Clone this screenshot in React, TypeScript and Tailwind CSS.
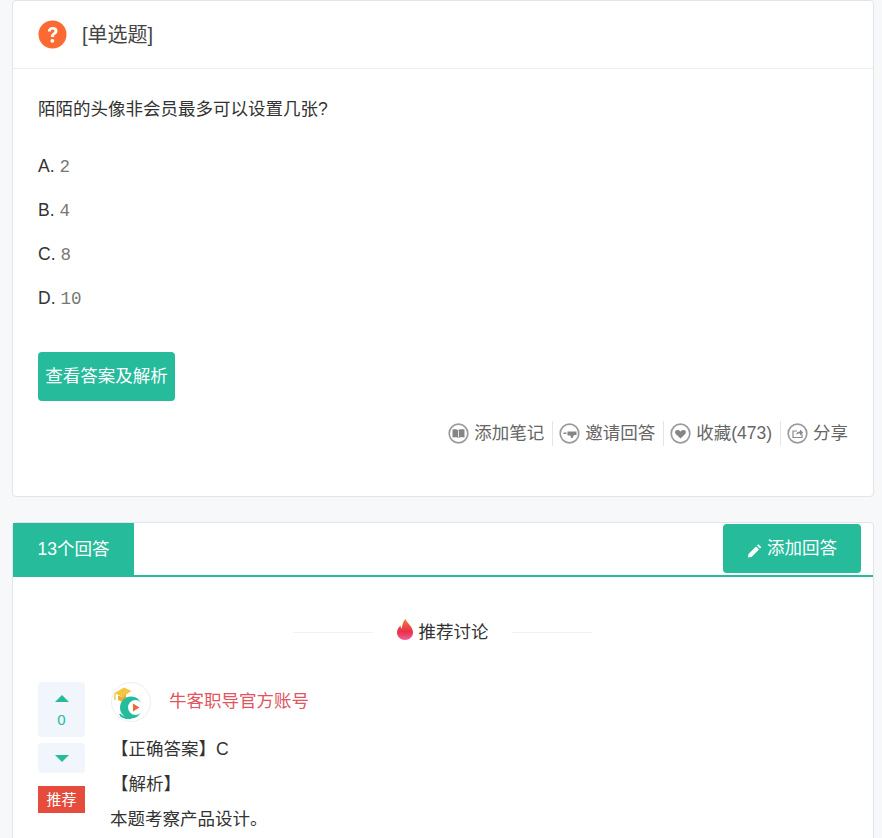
const font = { fontFamily: '"Liberation Sans", "Noto Sans CJK SC", sans-serif' };

const Round = ({ children }: { children: React.ReactNode }) => (
  <svg width="21" height="21" viewBox="0 0 21 21" className="shrink-0">
    <circle cx="10.5" cy="10.5" r="9.3" fill="#fff" stroke="#9b9b9b" strokeWidth="1.7" />
    {children}
  </svg>
);

const actions = [
  {
    label: "添加笔记",
    icon: (
      <>
        <path d="M4.500 6.500c2.300-.5 4.700-.3 5.600.7.900-1 3.500-1.200 6.400-.7v8c-2.500-.5-5-.4-6 .6-1-1-3.500-1.100-6-.6z" fill="#858585" />
        <path d="M10.500 7.500v7" stroke="#fff" strokeWidth="0.8" />
      </>
    ),
  },
  {
    label: "邀请回答",
    icon: <path d="M8.500 8.500h9v3.500h-2.500l-1.500 3h-1.500l-.5-2.500H8.500zM4.500 9.500h3v1.500h-3z" fill="#858585" />,
  },
  {
    label: "收藏(473)",
    icon: <path d="M10.500 15.500 5.800 11c-1.500-1.700-.5-4 1.700-4 1.300 0 2.300.6 3 1.500.7-.9 1.700-1.500 3-1.500 2.200 0 3.200 2.300 1.700 4z" fill="#858585" />,
  },
  {
    label: "分享",
    icon: (
      <>
        <path d="M15 11v3.500H6V8h4" fill="none" stroke="#8a8a8a" strokeWidth="1.200" />
        <path d="M9 12c.3-2.500 2-3.500 4-3.500V6.500l3.200 3-3.200 3v-2c-1.600 0-3 .4-4 1.500z" fill="#8a8a8a" />
      </>
    ),
  },
];

const options = [
  ["A.", "2"],
  ["B.", "4"],
  ["C.", "8"],
  ["D.", "10"],
];

const App = () => {
  return (
    <div className="h-[838px] overflow-hidden bg-[#f7f8fa] pl-3 pr-2 text-[17.5px] text-[#333]" style={font}>
      <div className="h-[497px] rounded border border-[#e2e4e8] bg-white">
        <div className="flex h-[68px] items-center gap-[15px] border-b border-[#eceef0] pl-[25px]">
          <svg width="29" height="29" viewBox="0 0 29 29">
            <circle cx="14.500" cy="14.500" r="14" fill="#fa6a32" />
            <path d="M9.800 11.500c.2-3 2.200-4.500 4.900-4.500 2.800 0 4.800 1.500 4.800 4 0 3.400-3.600 3.200-3.600 6h-3c0-4 3.500-4 3.500-6 0-1-.8-1.500-1.700-1.500-1.100 0-1.800.7-1.900 2z" fill="#fff" />
            <circle cx="14.400" cy="20.800" r="1.900" fill="#fff" />
          </svg>
          <span className="text-[20px] text-[#444]">[单选题]</span>
        </div>
        <p className="pl-[25px] pt-[28px] leading-[24px]">陌陌的头像非会员最多可以设置几张?</p>
        <div className="mt-[32px] flex flex-col gap-[18px] pl-[25px]">
          {options.map(([key, value]) => (
            <div key={key} className="flex h-[26px] items-baseline gap-[5px] leading-[26px]">
              <span>{key}</span>
              <span className="text-[17.5px] text-[#777]" style={{ fontFamily: '"Liberation Mono", monospace' }}>
                {value}
              </span>
            </div>
          ))}
        </div>
        <button className="ml-[25px] mt-[41px] flex h-[49px] w-[137px] items-center justify-center rounded bg-[#25bb9b] text-white">
          查看答案及解析
        </button>
        <div className="mt-[19px] flex items-center justify-end pr-[25px] text-[#666]">
          {actions.map((action, i) => (
            <div key={action.label} className="flex items-center">
              {i > 0 && <span className="ml-[8px] mr-[6px] h-[25px] w-px bg-[#e5e5e5]" />}
              <Round>{action.icon}</Round>
              <span className="ml-[5px] whitespace-nowrap leading-[26px]">{action.label}</span>
            </div>
          ))}
        </div>
      </div>

      <div className="mt-[25px] h-[400px] rounded-t border border-[#e2e4e8] bg-white">
        <div className="flex h-[54px] items-start justify-between border-b-2 border-[#25bb9b]">
          <div className="flex h-[52px] w-[121px] items-center justify-center bg-[#25bb9b] text-white">
            <span>13个回答</span>
          </div>
          <button className="mr-3 mt-[1px] flex h-[49px] w-[138px] items-center justify-center gap-[5px] rounded bg-[#25bb9b] text-white">
            <svg width="15" height="15" viewBox="0 0 15 15" className="mt-[3px]">
              <path d="M1 14.500 1.500 11 9 3.500l3 3-7.500 7.500zM10 2.500l1.300-1.200 3 3L13 5.500z" fill="#fff" />
            </svg>
            添加回答
          </button>
        </div>

        <div className="mt-[42px] flex items-center justify-center pr-[2px]">
          <span className="h-px w-[80px] bg-[#f1f2f3]" />
          <div className="ml-[23px] mr-[23px] flex items-center gap-[5px]">
            <svg width="18" height="23" viewBox="0 0 18 23" className="-mt-[5px]">
              <defs>
                <linearGradient id="flame" x1="0" y1="0" x2="0" y2="1">
                  <stop offset="0" stopColor="#f5793a" />
                  <stop offset="0.6" stopColor="#e8304a" />
                  <stop offset="1" stopColor="#f0609a" />
                </linearGradient>
              </defs>
              <path d="M9.500 1c.6 3.500 7.500 7 7.500 13.500 0 4.200-3.500 7.500-8 7.500s-8-3.300-8-7.500c0-3.500 2-5.500 3.500-7 .1 1.500.6 2.500 1.500 3C5.800 7 7.500 3 9.500 1z" fill="url(#flame)" />
            </svg>
            <span>推荐讨论</span>
          </div>
          <span className="h-px w-[80px] bg-[#f1f2f3]" />
        </div>

        <div className="mt-[37px] flex pl-[25px]">
          <div className="flex w-[47px] flex-col items-center">
            <div className="flex h-[55px] w-[47px] flex-col items-center rounded bg-[#f0f6fb] pt-[13px]">
              <span className="h-0 w-0 border-x-[7px] border-b-[7px] border-x-transparent border-b-[#25bb9b]" />
              <span className="mt-[8px] text-[15px] leading-[20px] text-[#25bb9b]">0</span>
            </div>
            <div className="mt-[6px] flex h-[30px] w-[47px] items-center justify-center rounded bg-[#f0f6fb]">
              <span className="h-0 w-0 border-x-[7px] border-t-[7px] border-x-transparent border-t-[#25bb9b]" />
            </div>
            <div className="mt-[13px] flex h-[27px] w-[47px] items-center justify-center bg-[#e64c3b] text-[15px] text-white">
              推荐
            </div>
          </div>
          <div className="ml-[26px] min-w-0 flex-1">
            <div className="flex items-center gap-[18px]">
              <svg width="40" height="40" viewBox="0 0 40 40">
                <circle cx="20" cy="20" r="19.500" fill="#fff" stroke="#eeeeee" />
                <path d="M3.500 11 13 5.500l7.500 3.500-9 6z" fill="#f5c542" />
                <path d="M7 13.500v4c2 2.500 5 2.500 8 .5v-6.500l-3.500 3.500z" fill="#e6b233" />
                <path d="M4 11v7" stroke="#f5c542" strokeWidth="1.400" />
                <circle cx="20" cy="25.500" r="11" fill="#25bb9b" />
                <path d="M9 32c1 3 6 4.500 11 4" stroke="#25bb9b" strokeWidth="2" fill="none" />
                <circle cx="24.500" cy="25.500" r="7.500" fill="#fff" />
                <path d="M22 21.500v8l6.500-4z" fill="#ee6a3a" />
              </svg>
              <span className="-mt-[3px] text-[#e2555f]">牛客职导官方账号</span>
            </div>
            <div className="-ml-px mt-[10px] leading-[35px]">
              <p className="pl-[1px]">【正确答案】C</p>
              <p className="pl-[1px]">【解析】</p>
              <p>本题考察产品设计。</p>
            </div>
          </div>
        </div>
      </div>
    </div>
  );
};

export default App;
